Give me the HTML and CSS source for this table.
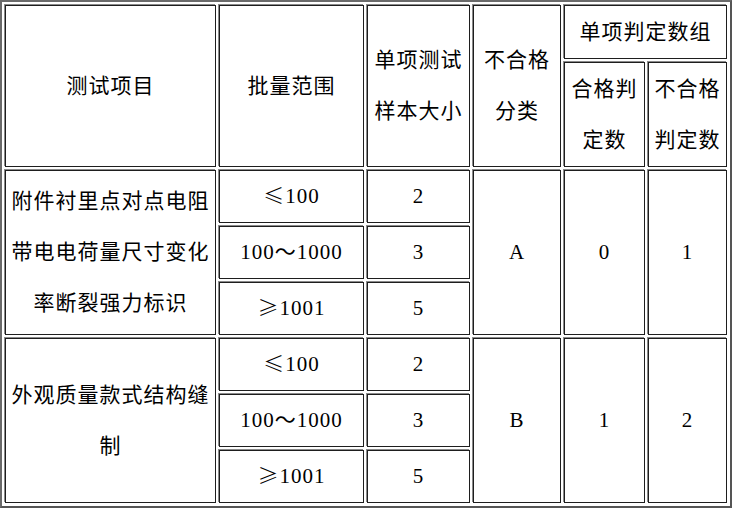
FILE: index.html
```html
<!DOCTYPE html>
<html lang="zh">
<head>
<meta charset="utf-8">
<link rel="stylesheet" href="styles.css">
</head>
<body>
<table class="grid">
  <colgroup>
    <col class="c1"><col class="c2"><col class="c3"><col class="c4"><col class="c5"><col class="c6">
  </colgroup>
  <tr class="h1">
    <td rowspan="2">测试项目</td>
    <td rowspan="2">批量范围</td>
    <td rowspan="2">单项测试样本大小</td>
    <td rowspan="2">不合格分类</td>
    <td colspan="2">单项判定数组</td>
  </tr>
  <tr class="h2">
    <td>合格判定数</td>
    <td>不合格判定数</td>
  </tr>
  <tr class="r">
    <td rowspan="3">附件衬里点对点电阻带电电荷量尺寸变化率断裂强力标识</td>
    <td><span class="sym">≤</span>100</td>
    <td>2</td>
    <td rowspan="3">A</td>
    <td rowspan="3">0</td>
    <td rowspan="3">1</td>
  </tr>
  <tr class="r">
    <td>100～1000</td>
    <td>3</td>
  </tr>
  <tr class="r">
    <td><span class="sym">≥</span>1001</td>
    <td>5</td>
  </tr>
  <tr class="r">
    <td rowspan="3">外观质量款式结构缝制</td>
    <td><span class="sym">≤</span>100</td>
    <td>2</td>
    <td rowspan="3">B</td>
    <td rowspan="3">1</td>
    <td rowspan="3">2</td>
  </tr>
  <tr class="r">
    <td>100～1000</td>
    <td>3</td>
  </tr>
  <tr class="r">
    <td><span class="sym">≥</span>1001</td>
    <td>5</td>
  </tr>
</table>
</body>
</html>
```
FILE: styles.css
```css
html, body {
  margin: 0;
  padding: 0;
  background: #fff;
}
.grid {
  table-layout: fixed;
  width: 730px;
  border-collapse: separate;
  border-spacing: 3px;
  border: 2px solid #6a6a6a;
  border-right-color: #555;
  border-bottom-color: #555;
  font-family: "Liberation Serif", "Noto Sans CJK SC", serif;
  font-size: 21px;
  letter-spacing: 1px;
  color: #000;
}
.c1 { width: 211px; }
.c2 { width: 145px; }
.c3 { width: 103px; }
.c4 { width: 88px; }
.c5 { width: 81px; }
.c6 { width: 79px; }
.grid td {
  border: 1px solid #1e1e1e;
  box-shadow: -1px -1px 0 #8a8a8a;
  padding: 0 1px;
  text-align: center;
  vertical-align: middle;
  line-height: 51px;
}
.sym {
  font-family: "Noto Sans CJK SC", sans-serif;
  font-weight: 300;
  line-height: 1;
}
.h1 { height: 54px; }
.h2 { height: 105px; }
.r { height: 53px; }
```
